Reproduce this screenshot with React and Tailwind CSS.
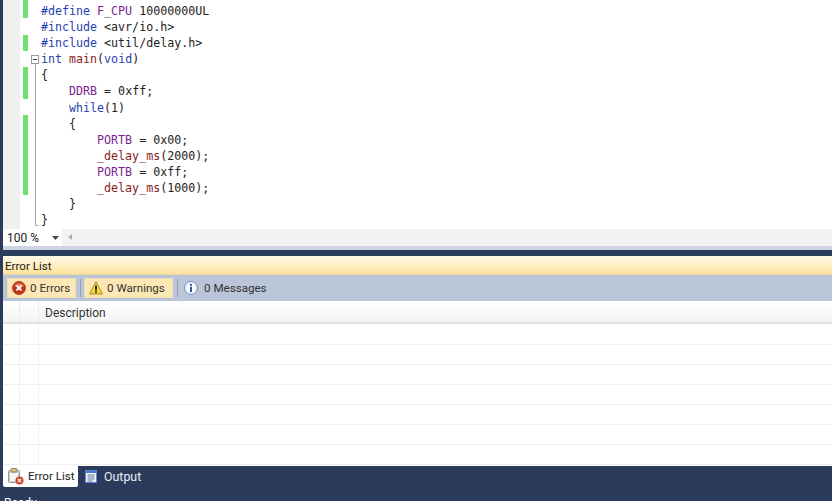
import React from 'react';

const P = ({ children }) => <span className="text-[#7a1f92]">{children}</span>;
const K = ({ children }) => <span className="text-[#1f3fb0]">{children}</span>;
const F = ({ children }) => <span className="text-[#8a1c1c]">{children}</span>;

const codeLines = [
  <><K>#define</K> <P>F_CPU</P> 10000000UL</>,
  <><K>#include</K> &lt;avr/io.h&gt;</>,
  <><K>#include</K> &lt;util/delay.h&gt;</>,
  <><K>int</K> <F>main</F>(<K>void</K>)</>,
  <>{'{'}</>,
  <>{'    '}<P>DDRB</P> = 0xff;</>,
  <>{'    '}<K>while</K>(1)</>,
  <>{'    {'}</>,
  <>{'        '}<P>PORTB</P> = 0x00;</>,
  <>{'        '}<F>_delay_ms</F>(2000);</>,
  <>{'        '}<P>PORTB</P> = 0xff;</>,
  <>{'        '}<F>_delay_ms</F>(1000);</>,
  <>{'    }'}</>,
  <>{'}'}</>,
];

function Outline() {
  return (
    <svg width="10" height="229" className="shrink-0">
      <rect x="0.5" y="55.5" width="7" height="8" fill="#fff" stroke="#9a9a9a" />
      <path d="M2 59.5h4" stroke="#444" />
      <path d="M4.5 64v161.5h3" fill="none" stroke="#a5a5a5" />
    </svg>
  );
}

function ErrorIcon() {
  return (
    <svg width="14" height="14" viewBox="0 0 14 14">
      <circle cx="7" cy="7" r="6.5" fill="#c4331a" stroke="#a8442f" />
      <path d="M2 5.5a5.2 4.5 0 0 1 10 0z" fill="#e37a5e" />
      <path d="M4.6 4.6l4.8 4.8M9.4 4.6l-4.8 4.8" stroke="#fff" strokeWidth="2" />
    </svg>
  );
}

function WarnIcon() {
  return (
    <svg width="14" height="14" viewBox="0 0 14 14">
      <path d="M7 .8L13.5 13H.5z" fill="#f8dc3c" stroke="#a98a1a" strokeLinejoin="round" />
      <path d="M7 4.5v5" stroke="#222" strokeWidth="1.8" />
      <path d="M7 10.2v1.8" stroke="#222" strokeWidth="1.8" />
    </svg>
  );
}

function InfoIcon() {
  return (
    <svg width="14" height="14" viewBox="0 0 14 14">
      <circle cx="7" cy="7" r="6.5" fill="#fff" stroke="#6f8fc4" />
      <circle cx="7" cy="7" r="5" fill="none" stroke="#d3def0" />
      <path d="M7 5.8V11" stroke="#2a56a8" strokeWidth="2" />
      <path d="M7 3v1.8" stroke="#2a56a8" strokeWidth="2" />
    </svg>
  );
}

function ClipboardIcon() {
  return (
    <svg width="16" height="17" viewBox="0 0 16 17">
      <rect x="0.5" y="2.5" width="11" height="12" rx="1" fill="#d9cfb6" stroke="#8f9bb0" />
      <rect x="2" y="5" width="8" height="8" fill="#f4f5f8" />
      <rect x="3" y="0.5" width="6" height="3.5" rx="1" fill="#d8c48a" stroke="#8c7f55" />
      <circle cx="11.5" cy="12.5" r="4" fill="#d2452a" />
      <path d="M9.8 10.8l3.4 3.4M13.2 10.8l-3.4 3.4" stroke="#fff" strokeWidth="1.2" />
    </svg>
  );
}

function OutputIcon() {
  return (
    <svg width="12" height="13" viewBox="0 0 12 13">
      <rect x="0.5" y="0.5" width="11" height="12" fill="#f2f5fb" stroke="#5f86d4" />
      <rect x="1" y="1" width="10" height="2" fill="#4a78d0" />
      <path d="M2.5 5h7M2.5 7h7M2.5 9h7M2.5 11h5" stroke="#5a74a8" />
    </svg>
  );
}

function ToolButton({ active, icon, label, width, gap }) {
  return (
    <div className={`flex items-center h-[20px] ${gap} ${width} ${active ? 'pl-[4px] bg-[#fde8b5] border border-[#eedfb8]' : 'pl-[3px]'}`}>
      {icon}
      <span className="pt-[2px] text-[11.6px] text-[#333]">{label}</span>
    </div>
  );
}

export default function App() {
  return (
    <div className="w-[832px] h-[501px] overflow-hidden flex flex-col bg-[#2b3b5c] pl-[3px] font-['Roboto',sans-serif]">
      <div className="h-[229px] flex bg-white shrink-0 overflow-hidden">
        <div className="w-[17px] bg-[#f0f0f0] shrink-0" />
        <div className="w-[11px] shrink-0 flex flex-col pl-[3px]">
          <div className="w-[5px] h-[18px] bg-[#70e070]" />
          <div className="w-[5px] h-[16px] mt-[17px] bg-[#70e070]" />
          <div className="w-[5px] h-[32px] mt-[16px] bg-[#70e070]" />
          <div className="w-[5px] h-[80px] mt-[16px] bg-[#70e070]" />
        </div>
        <Outline />
        <pre className="pt-[3px] font-['DejaVu_Sans_Mono',monospace] text-[11.65px] leading-[16.1px] text-[#222]">
          {codeLines.map((line, i) => <div key={i} className="h-[16.1px]">{line}</div>)}
        </pre>
      </div>

      <div className="h-[17px] bg-[#f2f2f2] flex shrink-0">
        <div className="w-[59px] bg-white flex items-center justify-between pl-[4px] pr-[3px] text-[12px] text-[#222]">
          <span>100 %</span>
          <svg width="7" height="4"><path d="M0 0h7L3.5 4z" fill="#444" /></svg>
        </div>
        <svg width="16" height="17"><path d="M10 5v6L6 8z" fill="#b0b0b0" /></svg>
      </div>
      <div className="h-[4px] bg-[#ced4e2] shrink-0" />
      <div className="h-[6px] shrink-0" />

      <div className="h-[19px] shrink-0 flex items-center pt-[3px] pl-[2px] text-[11.6px] text-[#222] bg-gradient-to-b from-[#fffbe8] via-[#fff0c4] to-[#fee29a] border-b border-[#e6d6a8]">
        Error List
      </div>
      <div className="h-[26px] shrink-0 flex items-center gap-[3px] pl-[4px] bg-[#bac5d8]">
        <ToolButton active width="w-[69px]" gap="gap-[4px]" icon={<ErrorIcon />} label="0 Errors" />
        <div className="w-px h-[18px] bg-[#8f9db5] ml-[1px]" />
        <ToolButton active width="w-[89px]" gap="gap-[4px]" icon={<WarnIcon />} label="0 Warnings" />
        <div className="w-px h-[18px] bg-[#8f9db5] ml-[1px]" />
        <ToolButton width="w-[90px]" gap="gap-[6px]" icon={<InfoIcon />} label="0 Messages" />
      </div>

      <div className="h-[165px] shrink-0 bg-white flex flex-col">
        <div className="h-[23px] shrink-0 flex bg-gradient-to-b from-[#ffffff] to-[#f4f4f4] border-b-2 border-[#e2e2e2] text-[12px] text-[#333]">
          <div className="w-[17px] border-r border-[#ececec]" />
          <div className="w-[19px] border-r border-[#ececec]" />
          <div className="pl-[6px] pt-[2px] flex items-center">Description</div>
        </div>
        <div className="pt-px flex flex-col">
          {[0, 1, 2, 3, 4, 5, 6].map(i => (
            <div key={i} className="h-[20px] shrink-0 flex border-b border-[#f0f0f0]">
              <div className="w-[17px] border-r border-[#f0f0f0]" />
              <div className="w-[19px] border-r border-[#f0f0f0]" />
            </div>
          ))}
        </div>
      </div>

      <div className="h-[21px] shrink-0 flex items-center text-[11.6px]">
        <div className="h-[21px] w-[75px] bg-white rounded-b-[2px] flex items-center gap-[4px] pl-[5px] text-[#222]">
          <ClipboardIcon />
          <span>Error List</span>
        </div>
        <div className="flex items-center gap-[7px] pl-[7px] text-[12.4px] text-[#e8ecf4]">
          <OutputIcon />
          <span className="pt-[2px]">Output</span>
        </div>
      </div>
      <div className="pt-[9px] pl-[1px] text-[12px] text-white leading-[14px]">Ready</div>
    </div>
  );
}
